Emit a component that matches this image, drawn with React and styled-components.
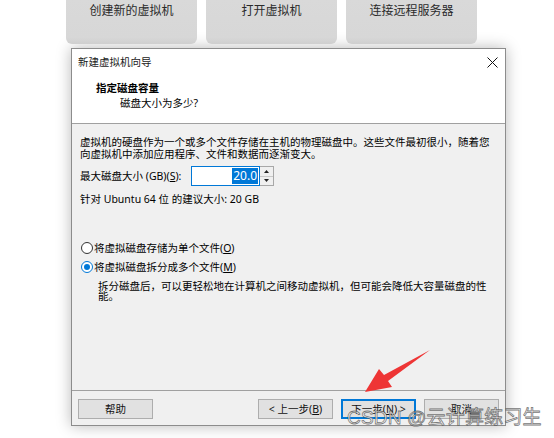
import React from "react";
import styled, { createGlobalStyle } from "styled-components";

const Global = createGlobalStyle`
  html, body { margin: 0; padding: 0; background: #ffffff; }
  body { width: 554px; height: 438px; overflow: hidden; }
  * { box-sizing: border-box; }
`;

const FONT = `"Segoe UI", "Noto Sans", "Noto Sans CJK SC", sans-serif`;

const Page = styled.div`
  position: relative;
  width: 554px;
  height: 438px;
  overflow: hidden;
  font-family: ${FONT};
  font-size: 10.5px;
  color: #000;
`;

const TileRow = styled.div`
  display: flex;
  gap: 9px;
  padding-left: 66px;
`;

const Tile = styled.div`
  width: 131px;
  height: 44px;
  background: linear-gradient(#d9d9d9 0%, #d7d7d7 85%, #cfcfcf 100%);
  border-radius: 0 0 6px 6px;
  display: flex;
  justify-content: center;
  padding-top: 4px;
  font-size: 12px;
  line-height: 14px;
  color: #2a2a2a;
`;

const Dialog = styled.div`
  margin: 4px 0 0 71px;
  width: 435px;
  height: 378px;
  border: 1px solid #8c8c8c;
  background: #f0f0f0;
  display: flex;
  flex-direction: column;
  box-shadow: 0 0 14px rgba(0, 0, 0, 0.28);
`;

const TitleBar = styled.div`
  height: 26px;
  background: #fff;
  display: flex;
  align-items: center;
  justify-content: space-between;
  padding: 0 7px 0 6px;
  line-height: 12px;
  color: #1a1a1a;
`;

const Header = styled.div`
  background: #fff;
  padding: 7px 0 14px 24px;
  border-bottom: 1px solid #a0a0a0;
  line-height: 12px;
`;

const HeaderTitle = styled.div`
  font-weight: bold;
`;

const HeaderSub = styled.div`
  margin-top: 3px;
  padding-left: 24px;
`;

const Body = styled.div`
  flex: 1;
  padding: 12px 8px 0 8px;
  line-height: 12px;
  border-bottom: 1px solid #a0a0a0;
`;

const Para = styled.div`
  margin-top: ${(p) => p.$mt || 0}px;
  padding-left: ${(p) => p.$indent || 0}px;
  line-height: ${(p) => p.$lh || 12}px;
  white-space: nowrap;
`;

const InputRow = styled.div`
  display: flex;
  align-items: center;
  margin-top: 6px;
  height: 20px;
`;

const Label = styled.span`
  width: 111px;
  white-space: nowrap;
`;

const NumBox = styled.div`
  width: 69px;
  height: 20px;
  border: 1px solid #0078d7;
  background: #fff;
  display: flex;
  align-items: center;
  justify-content: flex-end;
  padding-right: 1px;
`;

const Selected = styled.span`
  background: #0078d7;
  color: #fff;
  font-size: 12px;
  line-height: 16px;
  padding: 0 1px;
`;

const Spinner = styled.div`
  width: 14px;
  height: 20px;
  border: 1px solid #a8a8a8;
  border-left: none;
  background: #f0f0f0;
  display: flex;
  flex-direction: column;
`;

const SpinHalf = styled.div`
  flex: 1;
  display: flex;
  align-items: center;
  justify-content: center;
  border-bottom: ${(p) => (p.$top ? "1px solid #c8c8c8" : "none")};
`;

const RadioRow = styled.label`
  display: flex;
  align-items: center;
  height: 14px;
  margin-top: ${(p) => p.$mt}px;
  padding-left: 1px;
  white-space: nowrap;
`;

const RadioDot = styled.span`
  width: 12px;
  height: 12px;
  border-radius: 50%;
  border: 1px solid ${(p) => (p.$on ? "#0078d7" : "#333")};
  background: #fff;
  margin-right: 1px;
  display: flex;
  align-items: center;
  justify-content: center;
  &::after {
    content: "";
    width: 6px;
    height: 6px;
    border-radius: 50%;
    background: ${(p) => (p.$on ? "#0078d7" : "transparent")};
  }
`;

const U = styled.span`
  text-decoration: underline;
`;

const Footer = styled.div`
  height: 34px;
  display: flex;
  justify-content: space-between;
  padding: 8px 6px 0 6px;
`;

const BtnGroup = styled.div`
  display: flex;
  gap: 8px;
`;

const Btn = styled.div`
  width: 75px;
  height: 20px;
  background: #e1e1e1;
  border: ${(p) => (p.$primary ? "2px solid #0078d7" : "1px solid #adadad")};
  display: flex;
  align-items: center;
  justify-content: center;
  line-height: 12px;
  color: #111;
  white-space: nowrap;
`;

const ArrowSvg = styled.svg`
  position: absolute;
  left: 0;
  top: 0;
  pointer-events: none;
`;

const Watermark = styled.div`
  position: absolute;
  left: 347px;
  top: 406px;
  font-family: "Liberation Sans", "Noto Sans CJK SC", sans-serif;
  font-size: 19px;
  line-height: 24px;
  color: rgba(255, 255, 255, 0.8);
  -webkit-text-stroke: 0.8px rgba(60, 60, 60, 0.7);
  white-space: nowrap;
  letter-spacing: 0.2px;
`;

export default function App() {
  return (
    <Page>
      <Global />
      <TileRow>
        <Tile>创建新的虚拟机</Tile>
        <Tile>打开虚拟机</Tile>
        <Tile>连接远程服务器</Tile>
      </TileRow>
      <Dialog>
        <TitleBar>
          <span>新建虚拟机向导</span>
          <svg width="11" height="11" viewBox="0 0 11 11">
            <path d="M0.5 0.5 L10.5 10.5 M10.5 0.5 L0.5 10.5" stroke="#111" strokeWidth="1" />
          </svg>
        </TitleBar>
        <Header>
          <HeaderTitle>指定磁盘容量</HeaderTitle>
          <HeaderSub>磁盘大小为多少?</HeaderSub>
        </Header>
        <Body>
          <Para>虚拟机的硬盘作为一个或多个文件存储在主机的物理磁盘中。这些文件最初很小，随着您</Para>
          <Para>向虚拟机中添加应用程序、文件和数据而逐渐变大。</Para>
          <InputRow>
            <Label>
              最大磁盘大小 (GB)(<U>S</U>):
            </Label>
            <NumBox>
              <Selected>20.0</Selected>
            </NumBox>
            <Spinner>
              <SpinHalf $top>
                <svg width="5" height="3" viewBox="0 0 5 3"><path d="M2.5 0 L5 3 L0 3 Z" fill="#222" /></svg>
              </SpinHalf>
              <SpinHalf>
                <svg width="5" height="3" viewBox="0 0 5 3"><path d="M0 0 L5 0 L2.5 3 Z" fill="#222" /></svg>
              </SpinHalf>
            </Spinner>
          </InputRow>
          <Para $mt={7}>针对 Ubuntu 64 位 的建议大小: 20 GB</Para>
          <RadioRow $mt={36}>
            <RadioDot />
            <span>将虚拟磁盘存储为单个文件(<U>O</U>)</span>
          </RadioRow>
          <RadioRow $mt={5}>
            <RadioDot $on />
            <span>将虚拟磁盘拆分成多个文件(<U>M</U>)</span>
          </RadioRow>
          <Para $mt={7} $indent={18} $lh={10}>
            拆分磁盘后，可以更轻松地在计算机之间移动虚拟机，但可能会降低大容量磁盘的性
            <br />
            能。
          </Para>
        </Body>
        <Footer>
          <Btn>帮助</Btn>
          <BtnGroup>
            <Btn>&lt; 上一步(<U>B</U>)</Btn>
            <Btn $primary>下一步(<U>N</U>) &gt;</Btn>
            <Btn>取消</Btn>
          </BtnGroup>
        </Footer>
      </Dialog>
      <ArrowSvg width="554" height="438" viewBox="0 0 554 438">
        <polygon
          points="365,392 379,369 384,375 430,350 388,381 392,387"
          fill="#ee3535"
        />
      </ArrowSvg>
      <Watermark>CSDN @云计算练习生</Watermark>
    </Page>
  );
}
